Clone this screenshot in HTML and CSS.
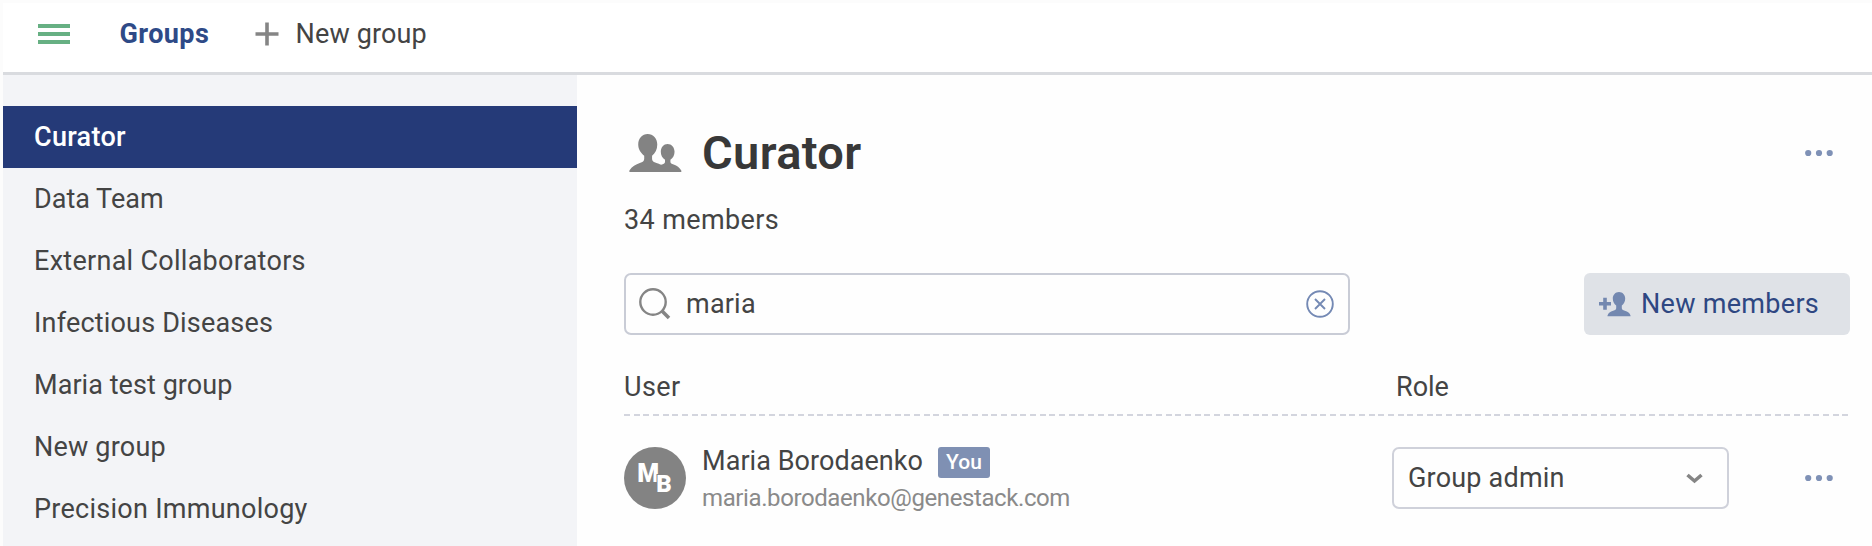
FILE: index.html
```
<!DOCTYPE html>
<html lang="en">
<head>
<meta charset="utf-8">
<title>Groups</title>
<link rel="stylesheet" href="styles.css">
</head>
<body>
<div class="app">
  <header class="topbar">
    <svg class="menu-icon" width="32" height="20" viewBox="0 0 32 20"><path d="M0 2h32M0 10h32M0 18h32" stroke="#67b083" stroke-width="4"/></svg>
    <a class="topbar-title">Groups</a>
    <a class="topbar-new">
      <svg width="24" height="24" viewBox="0 0 24 24"><path d="M12 .5v23M.5 12h23" stroke="#858585" stroke-width="3.600"/></svg>
      <span class="t-new-top">New group</span>
    </a>
  </header>
  <div class="body">
    <nav class="sidebar">
      <a class="group active"><span class="t-curator">Curator</span></a>
      <a class="group"><span class="t-data">Data Team</span></a>
      <a class="group"><span class="t-external">External Collaborators</span></a>
      <a class="group"><span class="t-infectious">Infectious Diseases</span></a>
      <a class="group"><span class="t-test">Maria test group</span></a>
      <a class="group"><span class="t-new">New group</span></a>
      <a class="group"><span class="t-precision">Precision Immunology</span></a>
    </nav>
    <main class="main">
      <div class="heading">
        <svg class="people" width="53" height="38" viewBox="0 0 54 38" preserveAspectRatio="none"><g fill="#838383"><path d="M19 0c5.600 0 9.800 4.500 9.800 10.500 0 4.800-2 8.700-5.300 11.200v3.300c0 2.100 1.500 3 4.500 4.100 3.400 1.200 5.500 2 7.800 4.400V38H.4v-1.500c2.600-4.200 6.600-6 10.600-7.500 3-1.100 4.500-2 4.500-4.100v-3.200C12.200 19.200 9.400 15.300 9.400 10.500 9.400 4.500 13.500 0 19 0z"/><path d="M39.300 10c4 0 7.100 3.400 7.100 7.700 0 3.500-1.600 6.300-4.200 8v2c0 1.500 1.200 2.200 3.300 2.900 3.500 1.200 5.800 2.800 7.800 6V38H34v-5c-1.500-1.300-2-1.600-3-2 4.500-.8 5.700-1.700 5.700-3.300v-2c-2.700-1.700-4.300-4.500-4.300-8 0-4.300 3-7.700 6.900-7.700z"/></g></svg>
        <h1>Curator</h1>
        <svg class="dots" width="28" height="8" viewBox="0 0 28 8"><g fill="#7f91b6"><circle cx="3.200" cy="4" r="3.100"/><circle cx="14" cy="4" r="3.100"/><circle cx="24.700" cy="4" r="3.100"/></g></svg>
      </div>
      <p class="count">34 members</p>
      <div class="tools">
        <div class="search">
          <svg width="32" height="32" viewBox="0 0 32 32" fill="none" stroke="#858585"><circle cx="14" cy="14" r="12.700" stroke-width="2.400"/><path d="M23 23l7 7" stroke-width="3.600"/></svg>
          <span class="query">maria</span>
          <svg width="28" height="28" viewBox="0 0 28 28" fill="none" stroke="#7489b4" stroke-width="1.900"><circle cx="14" cy="14" r="12.800"/><path d="M9 9l10 10M19 9L9 19"/></svg>
        </div>
        <button class="add">
          <svg width="32" height="25" viewBox="0 0 32 25" fill="#7388b0"><path d="M4.200 5.700h3.600v4.200H12v3.600H7.800v4.200H4.200v-4.200H0V9.900h4.200z"/><path d="M20 0c3.600 0 6.200 2.900 6.200 6.600 0 3-1.300 5.400-3.400 7V16c0 1.600 1 2.200 3 2.800 3 1 5 2 5.700 4.600v.8H8.500v-.8c.8-2.600 2.700-3.600 5.700-4.600 2-.6 3-1.200 3-2.800v-2.400c-2.100-1.600-3.400-4-3.400-7C13.800 2.900 16.400 0 20 0z"/></svg>
          <span>New members</span>
        </button>
      </div>
      <div class="table-head"><span class="t-user">User</span><span class="t-role">Role</span></div>
      <div class="member">
        <div class="avatar"><span class="initial-m">M</span><span class="initial-b">B</span></div>
        <div class="person">
          <div class="name-line"><span class="name">Maria Borodaenko</span><span class="badge">You</span></div>
          <span class="email">maria.borodaenko@genestack.com</span>
        </div>
        <div class="select">
          <span>Group admin</span>
          <svg width="17" height="11" viewBox="0 0 17 11"><path d="M1.500 2l7 6 7-6" fill="none" stroke="#858585" stroke-width="3.600"/></svg>
        </div>
        <svg class="dots" width="28" height="8" viewBox="0 0 28 8"><g fill="#7f91b6"><circle cx="3.200" cy="4" r="3.100"/><circle cx="14" cy="4" r="3.100"/><circle cx="24.700" cy="4" r="3.100"/></g></svg>
      </div>
    </main>
  </div>
</div>
</body>
</html>
```
FILE: styles.css
```
* { box-sizing: border-box; }
body {
  margin: 0;
  padding: 3px 0 0 3px;
  height: 546px;
  overflow: hidden;
  background: #fcfcfc;
  font: 27px/32px Roboto, "Noto Sans", sans-serif;
  color: #444;
}
svg { display: block; flex: none; }
span, a, h1 { white-space: nowrap; }
.app { height: 543px; background: #fefefe; display: flex; flex-direction: column; }
.topbar {
  height: 72px;
  flex: none;
  display: flex;
  align-items: center;
  padding: 0 0 7px 35px;
  background: #fff;
  border-bottom: 3px solid #d9dbdf;
}
.menu-icon { margin-left: -0.5px; }
.topbar-title { margin-left: 50px; width: 135px; font-weight: 700; color: #2e4a87; letter-spacing: 0.4px; }
.topbar-new { display: flex; align-items: center; gap: 17px; letter-spacing: 0.15px; }
.body { flex: 1; min-height: 0; display: flex; }
.sidebar { width: 574px; flex: none; padding-top: 31px; background: #f3f4f7; overflow: hidden; }
.group { display: flex; align-items: center; height: 62px; padding-left: 31px; }
.active { background: #253a78; color: #fff; font-weight: 500; }
.t-curator { letter-spacing: 0.3px; }
.t-external { letter-spacing: 0.28px; }
.t-infectious { letter-spacing: 0.19px; }
.t-test { letter-spacing: 0.06px; }
.t-new { letter-spacing: 0.2px; }
.t-precision { letter-spacing: 0.27px; }
.main { flex: 1; min-width: 0; padding: 47px 22px 0 47px; }
.heading { display: flex; align-items: center; height: 62px; padding: 0 17px 0 5px; }
h1 { margin: 0 0 0 20px; flex: 1; font-size: 47px; line-height: 62px; font-weight: 600; color: #383838; letter-spacing: 0.35px; }
.count { margin: 20px 0 37px; letter-spacing: 0.38px; }
.tools { display: flex; justify-content: space-between; height: 62px; }
.search {
  width: 726px;
  display: flex;
  align-items: center;
  padding: 0 14px 0 13px;
  border: 2px solid #c9ccd6;
  border-radius: 7px;
}
.query { flex: 1; margin-left: 15px; letter-spacing: 0.2px; }
.add {
  width: 266px;
  display: flex;
  align-items: center;
  gap: 10px;
  padding: 0 0 0 15px;
  border: 0;
  border-radius: 6px;
  background: #dfe2e7;
  color: #2e4782;
  font: inherit;
  letter-spacing: 0.3px;
}
.table-head {
  display: flex;
  height: 81px;
  padding-top: 36px;
  background: repeating-linear-gradient(90deg, #d3d5de 0 6px, transparent 6px 9.67px) left bottom / 100% 2px no-repeat;
}
.t-user { width: 772px; letter-spacing: 0.4px; }
.member { display: flex; align-items: center; height: 62px; margin-top: 31px; padding-right: 17px; }
.avatar {
  width: 62px;
  height: 62px;
  border-radius: 50%;
  background: #838383;
  color: #fff;
  display: flex;
  justify-content: center;
  font-weight: 900;
}
.initial-m { font-size: 25px; line-height: 54px; margin-left: -1px; }
.initial-b { font-size: 24px; line-height: 74px; margin-left: -3px; text-shadow: -1px -1px #838383; }
.person { width: 690px; margin-left: 16px; height: 62px; }
.name-line { display: flex; height: 31px; }
.name { width: 236px; line-height: 28px; letter-spacing: 0.06px; }
.badge {
  width: 52px;
  border-radius: 3px;
  background: #7f90b3;
  color: #fff;
  font-size: 21px;
  line-height: 31px;
  font-weight: 500;
  text-align: center;
}
.email { display: block; font-size: 24px; line-height: 40px; color: #8a8a8a; letter-spacing: -0.4px; }
.select {
  width: 337px;
  height: 62px;
  display: flex;
  align-items: center;
  justify-content: space-between;
  padding: 0 24px 0 14px;
  border: 2px solid #cfd1da;
  border-radius: 7px;
  letter-spacing: 0.2px;
}
.member .dots { margin-left: auto; }
```
